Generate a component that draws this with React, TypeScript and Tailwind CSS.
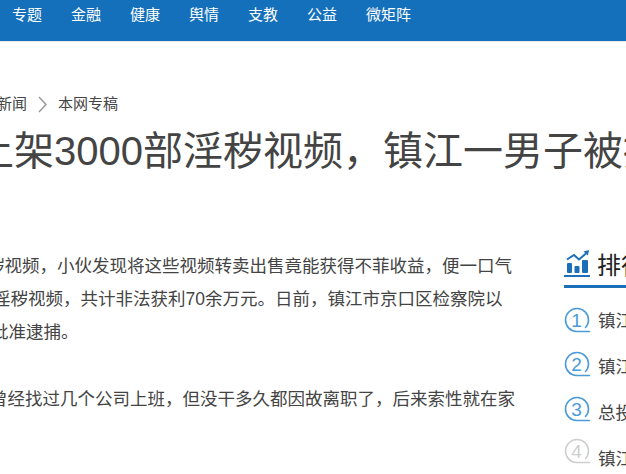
const NAV_ITEMS = ['专题', '金融', '健康', '舆情', '支教', '公益', '微矩阵']

const RANKS = [
  { n: 1, text: '镇江一男子上架淫秽视频被捕', color: '#4a9bd8', badgeTop: '-mt-[1px]' },
  { n: 2, text: '镇江市京口区检察院批捕', color: '#4a9bd8', badgeTop: '-mt-[3px]' },
  { n: 3, text: '总投资超亿元项目开工', color: '#4a9bd8', badgeTop: '-mt-[4px]' },
  { n: 4, text: '镇江今年将新增绿地', color: '#cfcfcf', badgeTop: '-mt-[8px]' },
]

function RankBadge({ n, color, className }: { n: number; color: string; className: string }) {
  return (
    <svg width="27" height="26" viewBox="0 0 27 26" fill="none" className={`shrink-0 ${className}`}>
      <path
        d="M25.500 24.500H12.500A11.500 11.500 0 1 1 24.500 13c0 3-1 5.500-3 7.500"
        stroke={color}
        strokeWidth="1.600"
        strokeLinecap="round"
      />
      <text x="12.500" y="19.500" textAnchor="middle" fontSize="19" fill={color} fontFamily="Liberation Sans, sans-serif">
        {n}
      </text>
    </svg>
  )
}

function ChartIcon() {
  return (
    <svg width="26" height="27" viewBox="0 0 26 27" fill="#1a6fb8" className="shrink-0">
      <rect x="3" y="13" width="5" height="10" rx="1" />
      <rect x="10.500" y="16" width="5" height="7" rx="1" />
      <rect x="18" y="10" width="6" height="13" rx="1" />
      <rect x="0" y="25" width="26" height="2" />
      <path d="M3 9.500 10 5l5 4.500L22 3.500" stroke="#1a6fb8" strokeWidth="2" fill="none" />
      <path d="M19.500 1.500 25 0l-1 5.500z" />
    </svg>
  )
}

export default function App() {
  return (
    <div className="h-[474px] w-[626px] overflow-hidden bg-white font-['Liberation_Sans','Noto_Sans_CJK_SC',sans-serif] text-[#444]">
      {/* 顶部导航 */}
      <nav className="flex h-[42px] gap-[29px] border-b border-[#e4e8ec] bg-[#1470bb] pl-3 pt-[5px] text-[15px] leading-5 text-white">
        {NAV_ITEMS.map((item) => (
          <span key={item} className="whitespace-nowrap">
            {item}
          </span>
        ))}
      </nav>

      {/* 面包屑 */}
      <div className="-ml-[3px] mt-[52px] flex items-center gap-[10px] text-[15px] leading-5">
        <span>新闻</span>
        <svg width="11" height="17" viewBox="0 0 11 17" fill="none" stroke="#999" strokeWidth="1.500">
          <path d="M2 1l7 7.500-7 7.500" />
        </svg>
        <span>本网专稿</span>
      </div>

      {/* 标题 */}
      <h1 className="-ml-[26px] mt-[7px] whitespace-nowrap text-[40px] font-normal leading-[60px]">
        上架3000部淫秽视频，镇江一男子被捕
      </h1>

      <div className="mt-[69px] flex">
        {/* 正文 */}
        <article className="-ml-[10px] w-[574px] shrink-0 whitespace-nowrap text-[17.5px] leading-[33px]">
          <p>
            <span className="-ml-[3px] block">秽视频，小伙发现将这些视频转卖出售竟能获得不菲收益，便一口气</span>
            <span className="ml-[3px] block">淫秽视频，共计非法获利70余万元。日前，镇江市京口区检察院以</span>
            <span className="ml-[1px] block">批准逮捕。</span>
          </p>
          <p className="mt-[34px]">曾经找过几个公司上班，但没干多久都因故离职了，后来索性就在家</p>
        </article>

        {/* 排行 */}
        <aside className="w-[300px] shrink-0">
          <div className="flex h-[38px] items-start gap-[7px] border-b-[3px] border-[#1a6fb8]">
            <ChartIcon />
            <span className="-mt-[1px] text-2xl leading-[34px] text-[#222]">排行榜</span>
          </div>
          <ul className="mt-[20px] flex flex-col gap-[19px]">
            {RANKS.map((r) => (
              <li key={r.n} className="flex h-[27px] items-start gap-[7px] whitespace-nowrap text-[17.5px] leading-[27px]">
                <RankBadge n={r.n} color={r.color} className={r.badgeTop} />
                <span>{r.text}</span>
              </li>
            ))}
          </ul>
        </aside>
      </div>
    </div>
  )
}
